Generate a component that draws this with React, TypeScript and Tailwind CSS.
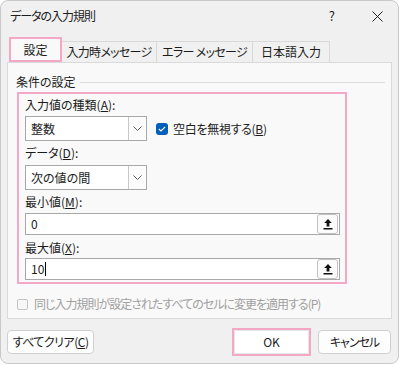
const jp = "font-['Noto_Sans_CJK_JP',sans-serif] [font-feature-settings:'palt']";

function Chevron() {
  return (
    <svg width="9" height="5" viewBox="0 0 9 5" fill="none">
      <path d="M0.5 0.5 L4.5 4.5 L8.5 0.5" stroke="#5f5f5f" strokeWidth="1" />
    </svg>
  );
}

function UploadIcon() {
  return (
    <svg width="10" height="12" viewBox="0 0 10 12" fill="none">
      <path d="M5 1 L1.2 5 H3.6 V8.5 H6.4 V5 H8.8 Z" fill="#111" />
      <rect x="0.5" y="10" width="9" height="1.5" fill="#111" />
    </svg>
  );
}

function Combo({ value }: { value: string }) {
  return (
    <div className="flex h-[25px] w-[122px] border border-[#a8a8a8] bg-white">
      <div className="flex flex-1 items-center pl-[5px] text-[12px] text-[#1b1b1b]">{value}</div>
      <div className="flex w-[18px] items-center justify-center border-l border-[#c8c8c8] bg-[#fcfcfc]">
        <Chevron />
      </div>
    </div>
  );
}

function RefInput({ value, caret }: { value: string; caret?: boolean }) {
  return (
    <div className="flex h-[22px] w-[315px] items-center border border-[#a8a8a8] bg-white">
      <div className="flex flex-1 items-center pl-[5px] text-[12px] text-[#1b1b1b]">
        {value}
        {caret && <span className="ml-[1px] inline-block h-[14px] w-[1px] bg-black" />}
      </div>
      <div className="mr-[1px] flex h-[20px] w-[21px] items-center justify-center rounded-[3px] border border-[#c2c2c2] bg-[#fbfbfb]">
        <UploadIcon />
      </div>
    </div>
  );
}

function Label({ text, k }: { text: string; k: string }) {
  return (
    <div className="h-[16px] text-[12px] leading-[16px] text-[#1b1b1b]">
      {text}(<u>{k}</u>):
    </div>
  );
}

export default function App() {
  return (
    <div className={`h-[365px] w-[400px] bg-white ${jp}`}>
      <div className="flex h-[364px] w-[399px] flex-col rounded-[8px] border border-[#c9c9c9] bg-[#f0f0f0]">
        {/* title bar */}
        <div className="flex h-[30px] items-center pl-[9px] pr-[15px]">
          <div className="flex-1 text-[12px] tracking-[-1px] text-[#1b1b1b]">データの入力規則</div>
          <div className="mr-[37px] text-[13px] text-[#1b1b1b]">?</div>
          <svg width="11" height="11" viewBox="0 0 11 11">
            <path d="M0.5 0.5 L10.5 10.5 M10.5 0.5 L0.5 10.5" stroke="#222" strokeWidth="1" />
          </svg>
        </div>

        {/* tabs */}
        <div className="mt-[7px] flex h-[24px] items-end pl-[8px] text-[12px] text-[#1b1b1b]">
          <div className="flex h-[25px] w-[53px] items-center justify-center border-2 border-[#f5a8c5] bg-[#f9f9f9]">
            設定
          </div>
          <div className="flex h-[21px] w-[95px] items-center justify-center border border-b-0 border-l-0 border-[#d9d9d9] tracking-[-0.7px]">
            入力時メッセージ
          </div>
          <div className="flex h-[21px] w-[96px] items-center justify-center border border-b-0 border-l-0 border-[#d9d9d9] tracking-[-0.7px]">
            エラー メッセージ
          </div>
          <div className="flex h-[21px] w-[77px] items-center justify-center border border-b-0 border-l-0 border-[#d9d9d9]">
            日本語入力
          </div>
        </div>

        {/* panel */}
        <div className="ml-[6px] flex h-[257px] w-[385px] flex-col border border-[#dadada] bg-[#f9f9f9] pt-[11px]">
          <div className="flex items-center pl-[8px] pr-[6px]">
            <span className="text-[12px] leading-[16px] text-[#1b1b1b]">条件の設定</span>
            <div className="ml-[4px] h-[1px] flex-1 bg-[#dcdcdc]" />
          </div>

          <div className="ml-[9px] mt-[2px] flex h-[192px] w-[330px] flex-col border-2 border-[#f5a8c5] pl-[6px] pt-[3px]">
            <Label text="入力値の種類" k="A" />
            <div className="mt-[3px] flex items-center">
              <Combo value="整数" />
              <div className="ml-[9px] flex h-[12px] w-[12px] items-center justify-center rounded-[3px] bg-[#005fb8]">
                <svg width="8" height="6" viewBox="0 0 8 6" fill="none">
                  <path d="M0.8 3 L3 5 L7.2 0.8" stroke="white" strokeWidth="1.2" />
                </svg>
              </div>
              <span className="ml-[5px] text-[12px] tracking-[-0.3px] text-[#1b1b1b]">
                空白を無視する(<u>B</u>)
              </span>
            </div>
            <div className="mt-[4px]">
              <Label text="データ" k="D" />
            </div>
            <div className="mt-[4px]">
              <Combo value="次の値の間" />
            </div>
            <div className="mt-[4px]">
              <Label text="最小値" k="M" />
            </div>
            <div className="mt-[3px]">
              <RefInput value="0" />
            </div>
            <div className="mt-[5px]">
              <Label text="最大値" k="X" />
            </div>
            <div className="mt-[2px]">
              <RefInput value="10" caret />
            </div>
          </div>

          <div className="ml-[9px] mt-[11px] flex items-center">
            <div className="h-[11px] w-[11px] rounded-[2px] border border-[#c4c4c4] bg-[#f7f7f7]" />
            <span className="ml-[6px] text-[12px] tracking-[-1px] text-[#a0a0a0]">
              同じ入力規則が設定されたすべてのセルに変更を適用する(P)
            </span>
          </div>
        </div>

        {/* footer */}
        <div className="mt-[9px] flex items-center pl-[6px] pr-[7px] text-[12px] text-[#1b1b1b]">
          <button className="h-[24px] w-[87px] rounded-[4px] border border-[#d0d0d0] bg-[#fdfdfd] tracking-[-0.5px]">
            すべてクリア(<u>C</u>)
          </button>
          <div className="flex-1" />
          <div className="flex h-[28px] w-[79px] items-center justify-center border-2 border-[#f5a8c5]">
            <button className="h-[24px] w-[75px] rounded-[2px] border border-[#e6e6e6] bg-white">OK</button>
          </div>
          <button className="ml-[7px] h-[24px] w-[73px] rounded-[4px] border border-[#d0d0d0] bg-[#fdfdfd] tracking-[-1px]">
            キャンセル
          </button>
        </div>
      </div>
    </div>
  );
}
